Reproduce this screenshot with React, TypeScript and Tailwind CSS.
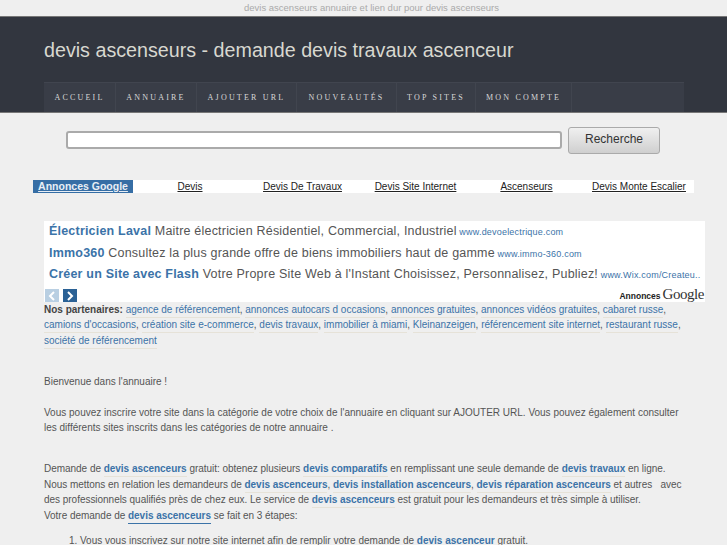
import React from "react";

function A({ children, b, hot }: { children: React.ReactNode; b?: boolean; hot?: boolean }) {
  return (
    <a className={`text-[#3b73a8] border-b pb-[2px] ${hot ? "border-[#3b73a8]" : "border-[#e6e2d8]"} ${b ? "font-bold" : ""}`}>{children}</a>
  );
}

const nav = [
  ["ACCUEIL", "w-[72px]"],
  ["ANNUAIRE", "w-[81px]"],
  ["AJOUTER URL", "w-[100px]"],
  ["NOUVEAUTÉS", "w-[100px]"],
  ["TOP SITES", "w-[79px]"],
  ["MON COMPTE", "w-[96px]"],
];

const ads = [
  ["Électricien Laval", "Maitre électricien Résidentiel, Commercial, Industriel", "www.devoelectrique.com"],
  ["Immo360", "Consultez la plus grande offre de biens immobiliers haut de gamme", "www.immo-360.com"],
  ["Créer un Site avec Flash", "Votre Propre Site Web à l'Instant Choisissez, Personnalisez, Publiez!", "www.Wix.com/Createu.."],
];

const links = [
  ["Devis", "w-[114px]"],
  ["Devis De Travaux", "w-[111px]"],
  ["Devis Site Internet", "w-[115px]"],
  ["Ascenseurs", "w-[107px]"],
  ["Devis Monte Escalier", "w-[118px]"],
];

export default function App() {
  return (
    <div className="w-[727px] h-[545px] overflow-hidden bg-[#efefef] font-['Liberation_Sans',sans-serif] text-[10px] leading-[15.4px] text-[#555]">
      <div className="h-[16px] pl-[16px] text-center text-[9.5px] leading-[15px] text-[#aaa]">
        devis ascenseurs annuaire et lien dur pour devis ascenseurs
      </div>
      <div className="h-[97px] border-y border-[#777] bg-[#32363f] pl-[44px] flex flex-col">
        <div className="h-[65px] pt-[20px] text-[19.7px] leading-[26px] text-[#d8d8d0]">
          devis ascenseurs - demande devis travaux ascenceur
        </div>
        <div className="w-[640px] h-[30px] bg-[#393d47] border-t border-[#41454f] flex">
          {nav.map(([t, w]) => (
            <div
              key={t}
              className={`${w} h-full border-r border-[#41454f] flex items-center justify-center font-['Liberation_Serif',serif] text-[8px] tracking-[2.2px] text-[#d8d8d8]`}
            >
              {t}
            </div>
          ))}
        </div>
      </div>

      <div className="flex items-center h-[40px] mt-[7px] pl-[66px] gap-[6px]">
        <input className="w-[496px] h-[18px] bg-white border-2 border-[#aaa] rounded-[3px]" />
        <button className="w-[92px] h-[27px] border border-[#aaa] rounded-[3px] bg-gradient-to-b from-[#f0f0f0] to-[#cfcfcf] text-[12px] text-[#333]">
          Recherche
        </button>
      </div>

      <div className="ml-[33px] mt-[20px] w-[661px] h-[13px] bg-white flex text-[10px] leading-[13px] text-[#222]">
        <div className="w-[100px] shrink-0 bg-[#366ea5] text-center text-[10.5px] font-bold text-[#e8eef5] underline">Annonces Google</div>
        {links.map(([t, w]) => (
          <div key={t} className={`${w} shrink-0 text-center underline`}>{t}</div>
        ))}
      </div>

      <div className="ml-[44px] mt-[28px] w-[661px] h-[81px] bg-white pl-[5px] pr-[1px] pt-[1px] flex flex-col">
        {ads.map(([a, b, c], i) => (
          <div key={i} className="h-[22px] leading-[19px] whitespace-nowrap text-[#555] text-[12.5px] tracking-[0.2px]">
            <span className="font-bold text-[#3b73a8]">{a}</span> {b}{" "}
            <span className="text-[9px] text-[#3b73a8] -ml-[1px]">{c}</span>
          </div>
        ))}
        <div className="flex items-end justify-between -ml-[4px]">
          <div className="flex gap-[4px]">
            <div className="w-[14px] h-[13px] bg-[#b9cfe2] flex items-center justify-center">
              <svg width="8" height="10" viewBox="0 0 8 10"><path d="M6 1L2 5l4 4" fill="none" stroke="#fff" strokeWidth="2" /></svg>
            </div>
            <div className="w-[14px] h-[13px] bg-[#2a6195] flex items-center justify-center">
              <svg width="8" height="10" viewBox="0 0 8 10"><path d="M2 1l4 4-4 4" fill="none" stroke="#fff" strokeWidth="2" /></svg>
            </div>
          </div>
          <div className="flex items-end text-[#222] h-[15px]">
            <span className="text-[8.5px] leading-[12px] font-bold mr-[2px]">Annonces</span>
            <span className="font-['Liberation_Serif',serif] text-[15px] leading-[15px] tracking-[-0.45px] text-[#333]">Google</span>
          </div>
        </div>
      </div>

      <div className="ml-[44px] w-[650px]">
        <div className="whitespace-nowrap">
          <b className="text-[#444]">Nos partenaires:</b> <A>agence de référencement</A>, <A>annonces autocars d occasions</A>,{" "}
          <A>annonces gratuites</A>, <A>annonces vidéos gratuites</A>, <A>cabaret russe</A>,
          <br />
          <A>camions d'occasions</A>, <A>création site e-commerce</A>, <A>devis travaux</A>, <A>immobilier à miami</A>, <A>Kleinanzeigen</A>,{" "}
          <A>référencement site internet</A>, <A>restaurant russe</A>,
          <br />
          <A>société de référencement</A>
        </div>
        <div className="whitespace-nowrap">
          <p className="mt-[26px]">Bienvenue dans l'annuaire !</p>
          <p className="mt-[15px]">
            Vous pouvez inscrire votre site dans la catégorie de votre choix de l'annuaire en cliquant sur AJOUTER URL. Vous pouvez également consulter
            <br />
            les différents sites inscrits dans les catégories de notre annuaire .
          </p>
          <p className="mt-[26px] tracking-[-0.03px]">
            Demande de <A b>devis ascenceurs</A> gratuit: obtenez plusieurs <A b>devis comparatifs</A> en remplissant une seule demande de <A b>devis travaux</A> en ligne.
            <br />
            Nous mettons en relation les demandeurs de <A b>devis ascenceurs</A>, <A b>devis installation ascenceurs</A>, <A b>devis réparation ascenceurs</A> et autres &nbsp; avec
            <br />
            des professionnels qualifiés près de chez eux. Le service de <A b>devis ascenceurs</A> est gratuit pour les demandeurs et très simple à utiliser.
            <br />
            Votre demande de <A b hot>devis ascenceurs</A> se fait en 3 étapes:
          </p>
          <ol className="list-decimal mt-[10px] ml-[36px]">
            <li>Vous vous inscrivez sur notre site internet afin de remplir votre demande de <A b>devis ascenceur</A> gratuit.</li>
          </ol>
        </div>
      </div>
    </div>
  );
}
